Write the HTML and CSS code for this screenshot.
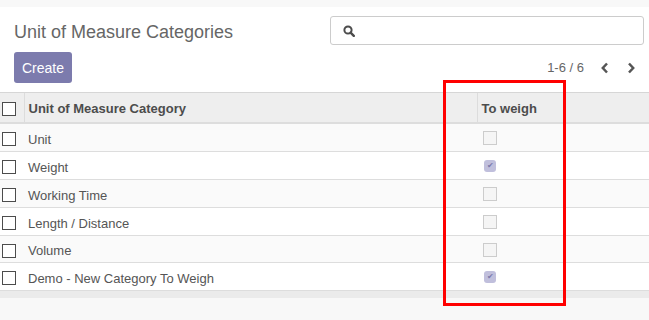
FILE: index.html
```html
<!DOCTYPE html>
<html lang="en">
<head>
    <meta charset="UTF-8">
    <title>Unit of Measure Categories</title>
    <link rel="stylesheet" href="styles.css">
</head>
<body>
    <div class="control-panel">
        <div class="cp-left">
            <h1 class="title">Unit of Measure Categories</h1>
            <button class="btn-create">Create</button>
        </div>
        <div class="cp-right">
            <div class="search">
                <svg class="search-icon" width="12" height="12" viewBox="0 0 12 12">
                    <circle cx="5" cy="5" r="3.6" fill="none" stroke="#4c4c4c" stroke-width="2"/>
                    <path d="M7.6 7.6 L10.8 10.8" stroke="#4c4c4c" stroke-width="2.4" stroke-linecap="round"/>
                </svg>
            </div>
            <div class="pager">
                <span class="pager-value">1-6 / 6</span>
                <svg class="pager-arrow" width="10" height="12" viewBox="0 0 10 12">
                    <path d="M7 1.5 L2.8 6 L7 10.5" fill="none" stroke="#555" stroke-width="2.5"/>
                </svg>
                <svg class="pager-arrow" width="10" height="12" viewBox="0 0 10 12">
                    <path d="M3 1.5 L7.2 6 L3 10.5" fill="none" stroke="#555" stroke-width="2.5"/>
                </svg>
            </div>
        </div>
    </div>

    <table class="list">
        <thead>
            <tr>
                <th class="col-select"><span class="box"></span></th>
                <th class="col-name">Unit of Measure Category</th>
                <th class="col-weigh">To weigh</th>
            </tr>
        </thead>
        <tbody>
            <tr>
                <td class="col-select"><span class="box"></span></td>
                <td>Unit</td>
                <td><span class="flag"></span></td>
            </tr>
            <tr>
                <td class="col-select"><span class="box"></span></td>
                <td>Weight</td>
                <td><span class="flag checked">&#10004;</span></td>
            </tr>
            <tr>
                <td class="col-select"><span class="box"></span></td>
                <td>Working Time</td>
                <td><span class="flag"></span></td>
            </tr>
            <tr>
                <td class="col-select"><span class="box"></span></td>
                <td>Length / Distance</td>
                <td><span class="flag"></span></td>
            </tr>
            <tr>
                <td class="col-select"><span class="box"></span></td>
                <td>Volume</td>
                <td><span class="flag"></span></td>
            </tr>
            <tr>
                <td class="col-select"><span class="box"></span></td>
                <td>Demo - New Category To Weigh</td>
                <td><span class="flag checked">&#10004;</span></td>
            </tr>
        </tbody>
    </table>
    <div class="list-footer"></div>

    <div class="highlight"></div>
</body>
</html>
```

FILE: styles.css
```css
* {
    margin: 0;
    padding: 0;
    box-sizing: border-box;
}

body {
    background-color: #f8f8f8;
    color: #4c4c4c;
    font-family: "Liberation Sans", Arial, sans-serif;
    font-size: 13px;
    padding-top: 7px;
    position: relative;
    min-height: 320px;
}

.control-panel {
    background-color: #ffffff;
    height: 86px;
    border-bottom: 1px solid #d6d6d6;
    display: flex;
    justify-content: space-between;
    padding: 9px 5px 0 14px;
}

.cp-left {
    display: flex;
    flex-direction: column;
    align-items: flex-start;
}

.title {
    font-size: 18px;
    font-weight: 400;
    color: #666666;
    line-height: 20px;
    margin-top: 6px;
}

.btn-create {
    margin-top: 10px;
    width: 58px;
    height: 31px;
    border: none;
    border-radius: 3px;
    background-color: #7c7bad;
    color: #ffffff;
    font-family: inherit;
    font-size: 14px;
}

.cp-right {
    width: 314px;
    display: flex;
    flex-direction: column;
    align-items: flex-end;
}

.search {
    width: 100%;
    height: 29px;
    border: 1px solid #cccccc;
    border-radius: 3px;
    display: flex;
    align-items: center;
    padding-left: 12px;
}

.pager {
    margin-top: 15px;
    display: flex;
    align-items: center;
    color: #666666;
    font-size: 13px;
}

.pager-value {
    margin-right: 16px;
}

.pager-arrow {
    margin-right: 16px;
}

.pager-arrow:last-child {
    margin-right: 8px;
}

.list {
    width: 100%;
    border-collapse: collapse;
    background-color: #ffffff;
}

.list th {
    background-color: #eeeeee;
    height: 30px;
    text-align: left;
    font-weight: 700;
    color: #4c4c4c;
    border-bottom: 2px solid #dddddd;
    padding: 2px 4px 0;
}

.list th + th {
    border-left: 1px solid #dcdcdc;
}

.list td {
    height: 28px;
    padding: 4px 4px 0;
    border-bottom: 1px solid #dddddd;
    color: #555555;
}

.list tbody tr:nth-child(odd) {
    background-color: #fafafa;
}

.list tbody tr:nth-child(5) td {
    height: 27px;
}

.col-select {
    width: 24px;
    padding-left: 2px !important;
    padding-right: 0 !important;
}

.col-weigh {
    width: 172px;
}

.box {
    display: block;
    width: 14px;
    height: 14px;
    border: 1px solid #4c4c4c;
    background-color: #ffffff;
}

.flag {
    display: block;
    width: 14px;
    height: 14px;
    margin-left: 2px;
    margin-top: -2px;
    border: 1px solid #cccccc;
    background-color: #f5f5f5;
    font-size: 8px;
    line-height: 12px;
    text-align: center;
}

.flag.checked {
    width: 12px;
    height: 12px;
    margin-left: 3px;
    border: none;
    border-radius: 3px;
    background-color: #c0bfdc;
    color: #7c7bad;
}

.list-footer {
    height: 7px;
    background-color: #ebebeb;
}

.highlight {
    position: absolute;
    left: 443px;
    top: 80px;
    width: 123px;
    height: 226px;
    border: 3px solid #ff0000;
}
```
